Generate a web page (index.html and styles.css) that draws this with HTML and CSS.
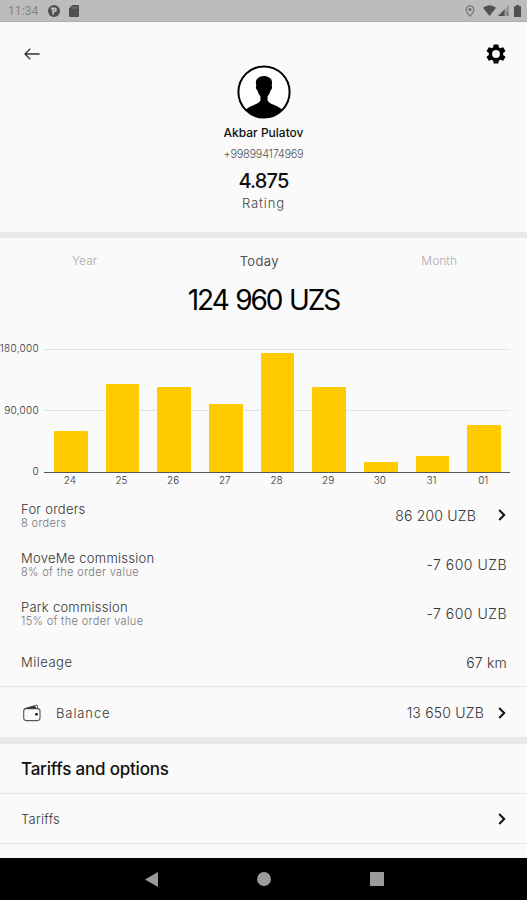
FILE: index.html
```html
<!DOCTYPE html>
<html lang="en">
    <head>
        <meta charset="utf-8">
        <title>Profile</title>
        <link rel="stylesheet" href="styles.css">
    </head>
    <body>
        <div class="status">
            <span class="clock">11:34</span>
            <svg class="app" width="12" height="12" viewBox="0 0 12 12"><circle cx="6" cy="6" r="6" fill="#505050"/><path d="M3 2.600h3.600a2.300 2.300 0 0 1 0 4.600H6v2.300H4.300V4.800H3z" fill="#bcbcbc"/><path d="M6 4.200h.7v1.500H6z" fill="#505050"/></svg>
            <svg class="card" width="10" height="12" viewBox="0 0 10 12"><path d="M3.4 0H9q1 0 1 1v10q0 1-1 1H1q-1 0-1-1V3.6z" fill="#505050"/><path d="M3.8 1.8v2M5.8 1.8v2M7.8 1.8v2" stroke="#888"/></svg>
            <svg class="pin" width="10" height="12" viewBox="0 0 10 12"><path d="M5 .8C2.8.8 1.2 2.3 1.2 4.4 1.2 7 5 11.2 5 11.2S8.8 7 8.8 4.4C8.8 2.3 7.2.8 5 .8z" fill="none" stroke="#777" stroke-width="1.2"/><circle cx="5" cy="4.6" r="1.5" fill="#666"/></svg>
            <svg class="wifi" width="13" height="11" viewBox="0 0 13 11"><path d="M0 2.8Q6.5-2.4 13 2.8L6.5 11z" fill="#505050"/></svg>
            <svg class="signal" width="11" height="11" viewBox="0 0 11 11"><path d="M11 0v11H0z" fill="#999"/><path d="M6.5 4.5V11H0z" fill="#505050"/><path d="M9.5 7v1.6M9.5 9.5v1" stroke="#505050"/></svg>
            <svg class="battery" width="7" height="12" viewBox="0 0 7 12"><path d="M2 0h3v1.2h2V12H0V1.2h2z" fill="#505050"/></svg>
        </div>

        <div class="profile">
            <div class="topbar">
                <svg width="16" height="14" viewBox="0 0 16 14"><path d="M15.6 7H1M6.200 1.800L1 7l5.200 5.200" fill="none" stroke="#333" stroke-width="1.300"/></svg>
                <svg width="20" height="20" viewBox="2 2 20 20"><path fill-rule="evenodd" d="M19.14 12.94c.04-.3.06-.61.06-.94s-.02-.64-.07-.94l2.03-1.58c.18-.14.23-.41.12-.61l-1.92-3.32c-.12-.22-.37-.29-.59-.22l-2.39.96c-.5-.38-1.03-.7-1.62-.94l-.36-2.54c-.04-.24-.24-.41-.48-.41h-3.84c-.24 0-.43.17-.47.41l-.36 2.54c-.59.24-1.13.57-1.62.94l-2.39-.96c-.22-.08-.47 0-.59.22L2.74 8.87c-.12.21-.08.47.12.61l2.03 1.58c-.05.3-.09.63-.09.94s.02.64.07.94l-2.03 1.58c-.18.14-.23.41-.12.61l1.92 3.32c.12.22.37.29.59.22l2.39-.96c.5.38 1.03.7 1.62.94l.36 2.54c.05.24.24.41.48.41h3.84c.24 0 .44-.17.47-.41l.36-2.54c.59-.24 1.13-.56 1.62-.94l2.39.96c.22.08.47 0 .59-.22l1.92-3.32c.12-.22.07-.47-.12-.61zM12 15.9a3.9 3.9 0 1 1 0-7.8 3.9 3.9 0 0 1 0 7.8z"/></svg>
            </div>
            <svg class="avatar" width="54" height="54" viewBox="0 0 54 54">
                <clipPath id="round"><circle cx="27" cy="27" r="25.5"/></clipPath>
                <circle cx="27" cy="27" r="25.6" fill="#fff" stroke="#000" stroke-width="2"/>
                <path clip-path="url(#round)" d="M27 11c-3 0-5 .9-6.400 2.500-1.700 1.200-2.200 3.800-1.300 7.200-.9.700-.3 3.800 1.200 4.800.6 2.600 1.700 4.600 2.900 5.800v4.200c-1.500 3.800-10.400 4.600-15 9.500V54h37v-9c-4.600-4.900-13.300-5.700-14.800-9.500v-4.200c1.200-1.200 2.300-3.200 2.900-5.800 1.500-1 2.100-4.100 1.200-4.800 1-4.500-.3-7.900-3.400-8.500C30.200 11.300 28.700 11 27 11z"/>
            </svg>
            <div class="name">Akbar Pulatov</div>
            <div class="phone">+998994174969</div>
            <div class="score">4.875</div>
            <div class="rating">Rating</div>
        </div>

        <div class="income">
            <div class="tabs">
                <span class="year">Year</span>
                <span class="today">Today</span>
                <span class="month">Month</span>
            </div>
            <div class="total">124 960 UZS</div>
            <div class="chart">
                <div class="scale"><span>180,000</span><span>90,000</span><span>0</span></div>
                <div class="plot">
                    <div class="bars">
                        <div class="bar" style="height:41px"></div>
                        <div class="bar" style="height:88px"></div>
                        <div class="bar" style="height:85px"></div>
                        <div class="bar" style="height:68px"></div>
                        <div class="bar" style="height:119px"></div>
                        <div class="bar" style="height:85px"></div>
                        <div class="bar" style="height:10px"></div>
                        <div class="bar" style="height:16px"></div>
                        <div class="bar" style="height:47px"></div>
                    </div>
                    <div class="days">
                        <span>24</span><span>25</span><span>26</span><span>27</span><span>28</span><span>29</span><span>30</span><span>31</span><span>01</span>
                    </div>
                </div>
            </div>
        </div>

        <div class="rows">
            <div class="row">
                <div class="label"><span>For orders</span><small>8 orders</small></div>
                <div class="value">86 200 UZB</div>
                <svg class="chevron far" width="8" height="12" viewBox="0 0 8 12"><path d="M1.2 1l5 5-5 5"/></svg>
            </div>
            <div class="row">
                <div class="label"><span>MoveMe commission</span><small>8% of the order value</small></div>
                <div class="value minus">-7 600 UZB</div>
            </div>
            <div class="row">
                <div class="label"><span>Park commission</span><small>15% of the order value</small></div>
                <div class="value minus">-7 600 UZB</div>
            </div>
            <div class="row">
                <div class="label wide"><span>Mileage</span></div>
                <div class="value">67 km</div>
            </div>
        </div>

        <div class="row balance">
            <svg class="wallet" width="18" height="18" viewBox="0 0 18 18"><rect x=".7" y="4.600" width="16.300" height="12" rx="2.500" fill="none" stroke="#555" stroke-width="1.100"/><path d="M1.500 4.600L14 1l1 3.600" fill="none" stroke="#555"/><path d="M2 4.500l9.500-2.700L14 4.500z" fill="#333"/><circle cx="13.500" cy="10.200" r="1.300"/></svg>
            <div class="label wider"><span>Balance</span></div>
            <div class="value">13 650 UZB</div>
            <svg class="chevron" width="8" height="12" viewBox="0 0 8 12"><path d="M1.2 1l5 5-5 5"/></svg>
        </div>

        <div class="row title">Tariffs and options</div>
        <div class="row tariffs">
            <div class="label"><span>Tariffs</span></div>
            <svg class="chevron" width="8" height="12" viewBox="0 0 8 12"><path d="M1.2 1l5 5-5 5"/></svg>
        </div>

        <div class="navbar">
            <svg width="13" height="15" viewBox="0 0 13 15"><path d="M13 0v15L0 7.500z"/></svg>
            <svg width="14" height="14" viewBox="0 0 14 14"><circle cx="7" cy="7" r="7"/></svg>
            <svg width="14" height="14" viewBox="0 0 14 14"><path d="M0 0h14v14H0z"/></svg>
        </div>
    </body>
</html>
```
FILE: styles.css
```css
*{
    box-sizing: border-box;
}
body{
    margin: 0;
    height: 900px;
    display: flex;
    flex-direction: column;
    overflow: hidden;
    background-color: #fafafa;
    color: #333;
    font-family: Inter, "Liberation Sans", sans-serif;
    font-weight: 300;
}
svg{
    display: block;
    flex: none;
}

/* status bar */
.status{
    height: 22px;
    padding: 0 6px 0 8px;
    display: flex;
    align-items: center;
    background-color: #bcbcbc;
    border-bottom: 1px solid #b0b0b0;
}
.clock{
    width: 40px;
    font: 400 12px Roboto, sans-serif;
    letter-spacing: 0.1px;
    color: #858585;
}
.card{
    margin-left: 9px;
}
.pin{
    margin-left: auto;
}
.wifi{
    margin-left: 8px;
}
.signal{
    margin-left: 2px;
}
.battery{
    margin-left: 5px;
}

/* driver */
.profile{
    height: 216px;
    border-bottom: 6px solid #e8e8e8;
    display: flex;
    flex-direction: column;
    align-items: center;
    white-space: nowrap;
}
.topbar{
    width: 100%;
    height: 43px;
    padding: 21px 21px 0 24px;
    display: flex;
    justify-content: space-between;
    align-items: center;
}
.name{
    margin-top: 5px;
    line-height: 18px;
    font-size: 12px;
    font-weight: 500;
    color: #111;
}
.phone{
    margin-top: 3px;
    line-height: 18px;
    font-size: 11px;
    letter-spacing: -0.3px;
    color: #555;
}
.score{
    margin-top: 5px;
    line-height: 26px;
    font-size: 20px;
    letter-spacing: -0.8px;
    font-weight: 500;
    color: #111;
}
.rating{
    line-height: 18px;
    font-size: 13px;
    letter-spacing: 0.9px;
    color: #444;
}

/* income chart */
.income{
    height: 252px;
}
.tabs{
    height: 45px;
    padding: 0 70px 0 72px;
    display: flex;
    justify-content: space-between;
    align-items: center;
    font-size: 12px;
    color: #aaa;
}
.today{
    font-size: 13px;
    font-weight: 400;
    letter-spacing: 0.3px;
    color: #555;
}
.total{
    line-height: 34px;
    text-align: center;
    font-size: 28px;
    font-weight: 400;
    letter-spacing: -2px;
    word-spacing: 1.5px;
    color: #000;
}
.chart{
    margin-top: 32px;
    display: flex;
}
.scale{
    width: 39px;
    height: 136px;
    margin-right: 5px;
    margin-top: -7px;
    display: flex;
    flex-direction: column;
    justify-content: space-between;
    align-items: flex-end;
    line-height: 13px;
    font-size: 10px;
    letter-spacing: 0.3px;
}
.plot{
    width: 466px;
}
.bars{
    height: 124px;
    padding-left: 1px;
    display: flex;
    align-items: flex-end;
    justify-content: space-around;
    border-bottom: 1px solid #555;
    background: linear-gradient(#e3e3e3, #e3e3e3) 0 0 / 100% 1px no-repeat,
        linear-gradient(#e3e3e3, #e3e3e3) 0 61px / 100% 1px no-repeat;
}
.bar{
    width: 33.5px;
    background-color: #ffcb00;
    border-radius: 1px 1px 0 0;
}
.days{
    padding-right: 1px;
    display: flex;
    line-height: 14px;
    font-size: 10px;
    text-align: center;
}
.days span{
    flex: 1;
}

/* list */
.row{
    height: 49px;
    flex: none;
    padding: 0 20px 0 21px;
    display: flex;
    align-items: center;
    white-space: nowrap;
}
.rows{
    height: 197px;
    border-bottom: 1px solid #e6e6e6;
}
.rows .row{
    padding-top: 1px;
}
.label{
    flex: 1;
    padding-top: 1px;
    line-height: 15px;
    font-size: 13px;
    letter-spacing: 0.25px;
}
.wide{
    letter-spacing: 0.5px;
}
.wider{
    letter-spacing: 0.9px;
}
.label span{
    display: block;
}
.label small{
    display: block;
    line-height: 13px;
    font-size: 11px;
    letter-spacing: 0.35px;
    color: #777;
}
.value{
    font-size: 14px;
    letter-spacing: 0.2px;
}
.minus{
    letter-spacing: 0.5px;
}
.chevron{
    margin: 0 1px 0 14px;
    fill: none;
    stroke: #111;
    stroke-width: 2;
}
.far{
    margin-left: 22px;
}
.balance{
    height: 57px;
    padding-top: 1px;
    border-bottom: 7px solid #e8e8e8;
}
.wallet{
    margin: 0 15px 0 2px;
}
.title{
    height: 50px;
    padding-top: 1px;
    font-size: 17px;
    font-weight: 500;
    letter-spacing: -0.2px;
    color: #111;
    border-bottom: 1px solid #e6e6e6;
}
.tariffs{
    height: 50px;
    padding-top: 1px;
    border-bottom: 1px solid #e6e6e6;
}

/* system buttons */
.navbar{
    height: 42px;
    margin-top: auto;
    padding-left: 1px;
    display: flex;
    justify-content: center;
    gap: 99px;
    align-items: center;
    background-color: #000;
    fill: #9b9b9b;
}
```
